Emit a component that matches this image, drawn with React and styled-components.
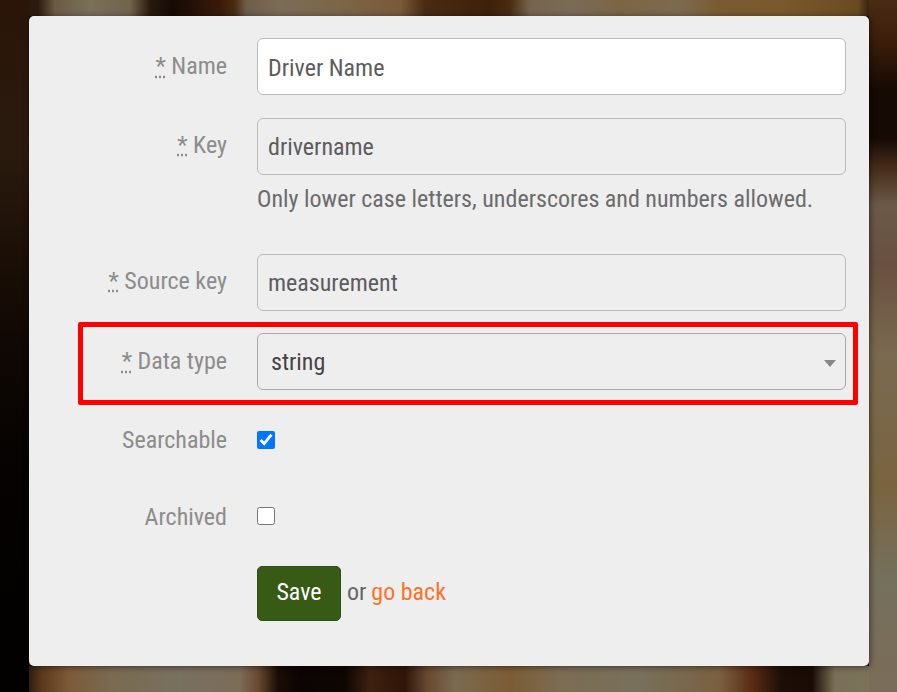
import React from 'react';
import styled, { createGlobalStyle } from 'styled-components';

const topStrip = `linear-gradient(to right,
  #2a1608 0, #2c1a0e 38px, #6b5a45 55px, #7a705c 90px, #72634c 130px, #2a1a0c 150px, #150a03 172px,
  #3a1a0a 220px, #4a2c14 235px, #6d5c48 246px, #7b6c58 280px, #7c6548 340px, #7a5a38 400px, #4a2a12 425px,
  #3e210c 490px, #4a2c10 510px, #75644e 530px, #7a6b58 570px, #7c6545 620px, #7c6a50 680px, #7a5a30 720px,
  #7a5a2c 780px, #6a4a20 858px, #2c1608 872px, #2a1206 897px)`;

const bottomStrip = `linear-gradient(to right,
  #0a0503 0, #0a0503 18px, #5a3a1c 42px, #7c5a38 68px, #7a6a50 110px, #787060 180px, #7c6c58 240px,
  #6a4a30 258px, #1c0c04 278px, #0a0402 300px, #0e0603 345px, #3e2010 370px, #2e1608 405px, #6a4a30 428px,
  #7a6a50 455px, #7c5c34 510px, #7c6c52 560px, #78705c 640px, #7a6040 720px, #5a2c14 752px, #1c0e06 782px,
  #1a0c04 812px, #7a7058 835px, #7c745c 897px)`;

const leftStrip = `linear-gradient(to bottom,
  #2a1508 0, #2a1a0e 150px, #1c1006 250px, #100804 340px, #050201 470px, #020100 692px)`;

const rightStrip = `linear-gradient(to bottom,
  #4a2c14 0, #3a1c0a 44px, #150a04 90px, #150a04 138px, #4a2e1c 170px, #6a5a48 205px, #6a5040 265px,
  #7a6a50 354px, #7a6440 487px, #75705c 575px, #7a6c58 692px)`;

const Global = createGlobalStyle`
  html, body { margin: 0; height: 100%; overflow: hidden; }
  body {
    background-color: #1c0d05;
    background-repeat: no-repeat;
    background-image: ${leftStrip}, ${rightStrip}, ${topStrip}, ${bottomStrip};
    background-size: 29px 100%, 28px 100%, 100% 16px, 100% 26px;
    background-position: left top, right top, left top, left bottom;
  }
`;

const Backdrop = styled.div`
  width: 897px;
  height: 692px;
  box-sizing: border-box;
  padding: 16px 28px 26px 29px;
  overflow: hidden;
  font-family: Roboto, sans-serif;
  font-stretch: 75%;
  font-size: 24px;
`;

const Card = styled.form`
  height: 650px;
  box-sizing: border-box;
  background: #eee;
  border-radius: 5px;
  padding: 22px 23px 0 0;
  box-shadow: 1px 1px 6px rgba(0, 0, 0, .5);
`;

const Row = styled.div`
  position: relative;
  display: grid;
  grid-template-columns: 198px 1fr;
  column-gap: 30px;
  height: ${p => p.$height}px;
`;

const Label = styled.label`
  text-align: right;
  color: #8c8c8c;
  line-height: 56.6px;
  margin-top: ${p => p.$shift || 0}px;
`;

const Required = styled.abbr`
  text-decoration: underline dotted;
  text-underline-offset: 2px;
  cursor: help;
`;

const Input = styled.input`
  width: 100%;
  height: 57px;
  box-sizing: border-box;
  border: 1px solid #bbb;
  border-radius: 6px;
  padding: 2px 10px 0;
  color: #5c5c5c;
  font: inherit;
  background: ${p => (p.readOnly ? '#eee' : '#fff')};
  outline: none;
`;

const Help = styled.div`
  color: #6b6b6b;
  line-height: 36px;
  margin-top: 6px;
`;

const SelectWrap = styled.div`
  position: relative;
  height: 57px;

  &::after {
    content: "";
    position: absolute;
    right: 10px;
    top: 27px;
    border-style: solid;
    border-width: 7px 6px 0;
    border-color: #888 transparent transparent;
  }
`;

const Select = styled.select`
  appearance: none;
  width: 100%;
  height: 100%;
  box-sizing: border-box;
  border: 1px solid #aaa;
  border-radius: 6px;
  padding: 0 13px;
  color: #444;
  font: inherit;
  background: #eee;
  outline: none;
`;

const Highlight = styled.div`
  position: absolute;
  left: 49px;
  right: -12px;
  top: -11px;
  height: 83px;
  box-sizing: border-box;
  border: 5px solid #f00;
  border-radius: 2px;
  pointer-events: none;
`;

const Check = styled.input`
  width: 18px;
  height: 18px;
  margin: 0;
  align-self: center;
`;

const CheckCell = styled.div`
  display: flex;
  height: 56.6px;
`;

const Actions = styled.div`
  display: flex;
  align-items: center;
  gap: 5px;
  margin-left: 228px;
  color: #666;
`;

const SaveButton = styled.button`
  width: 84px;
  height: 55px;
  box-sizing: border-box;
  border: 1px solid #2f4f10;
  border-radius: 5px;
  padding: 0 0 2px;
  margin-right: 1px;
  background: #375a14;
  color: #fff;
  font: inherit;
`;

const OrText = styled.span`
  margin-bottom: 2px;
`;

const BackLink = styled.a`
  margin-bottom: 2px;
  color: #f97427;
  text-decoration: none;
`;

export default function App() {
  return (
    <>
      <Global />
      <Backdrop>
        <Card>
          <Row $height={79.6}>
            <Label><Required title="required">*</Required> Name</Label>
            <Input defaultValue="Driver Name" />
          </Row>
          <Row $height={136}>
            <Label $shift={-1}><Required title="required">*</Required> Key</Label>
            <div>
              <Input readOnly defaultValue="drivername" />
              <Help>Only lower case letters, underscores and numbers allowed.</Help>
            </div>
          </Row>
          <Row $height={79.6}>
            <Label $shift={-1}><Required title="required">*</Required> Source key</Label>
            <Input readOnly defaultValue="measurement" />
          </Row>
          <Row $height={78.6}>
            <Label><Required title="required">*</Required> Data type</Label>
            <SelectWrap>
              <Select defaultValue="string">
                <option value="string">string</option>
                <option value="number">number</option>
              </Select>
            </SelectWrap>
            <Highlight />
          </Row>
          <Row $height={76.3}>
            <Label>Searchable</Label>
            <CheckCell><Check type="checkbox" defaultChecked /></CheckCell>
          </Row>
          <Row $height={77.9}>
            <Label $shift={1}>Archived</Label>
            <CheckCell><Check type="checkbox" /></CheckCell>
          </Row>
          <Actions>
            <SaveButton type="button">Save</SaveButton>
            <OrText>or</OrText>
            <BackLink href="#">go back</BackLink>
          </Actions>
        </Card>
      </Backdrop>
    </>
  );
}
